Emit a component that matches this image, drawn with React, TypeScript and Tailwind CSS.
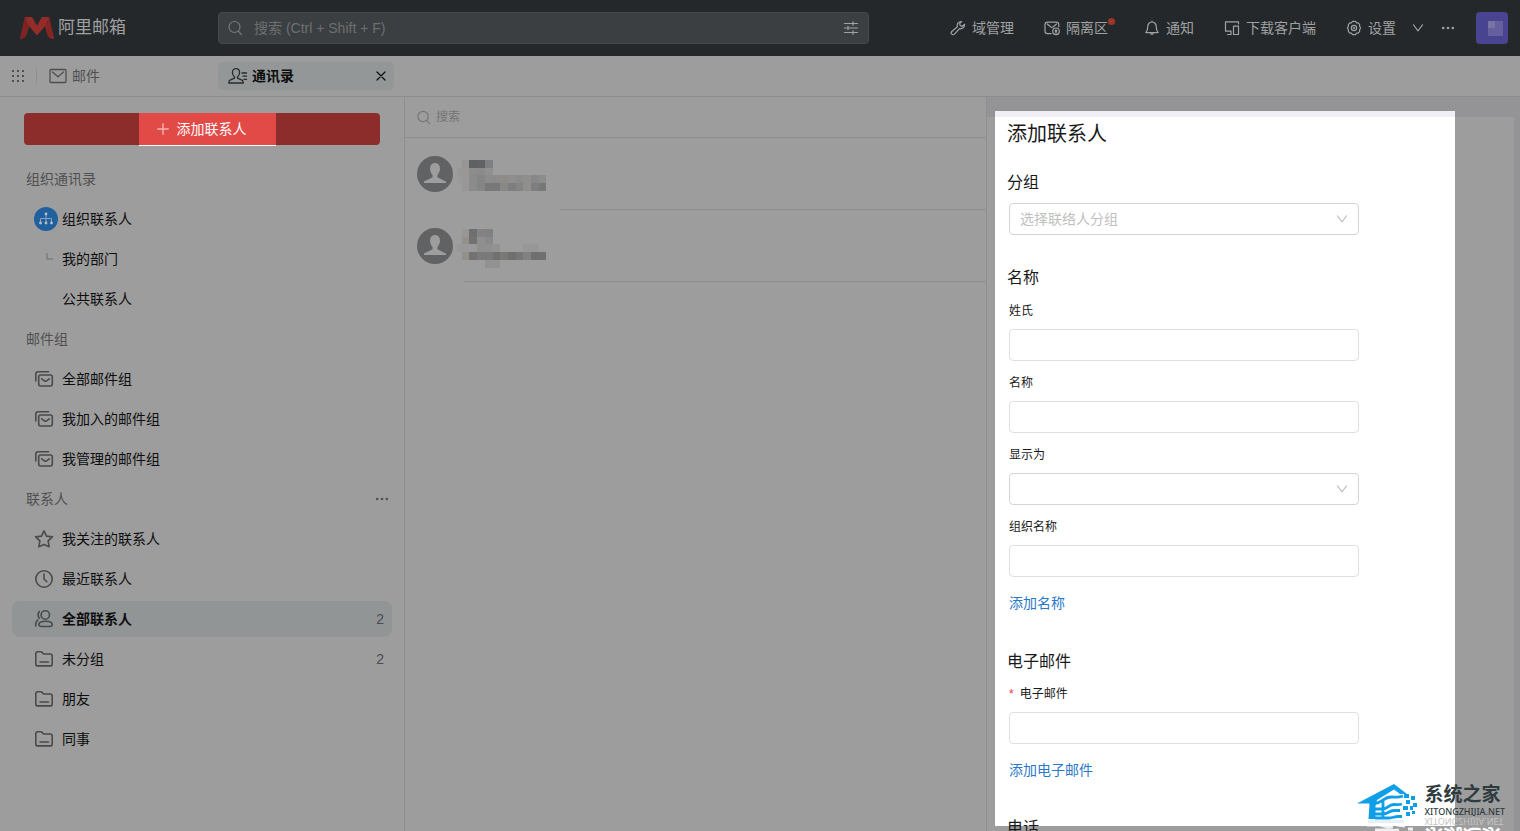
import React from 'react';

interface IconProps {
  className?: string;
}

interface NavItem {
  label: string;
  icon?: React.FC<IconProps>;
  count?: number;
  active?: boolean;
}

interface NavGroup {
  title: string;
  more?: boolean;
  items: NavItem[];
}

const stroke = {
  fill: 'none',
  stroke: 'currentColor',
  strokeLinecap: 'round' as const,
  strokeLinejoin: 'round' as const,
};

/* ---------- Icons ---------- */

const SearchIcon: React.FC<IconProps> = ({ className }) => (
  <svg viewBox="0 0 16 16" className={className} {...stroke} strokeWidth="1.2">
    <circle cx="6.5" cy="7" r="5.5" />
    <path d="M10.500 11.400l3 3.200" />
  </svg>
);

const FilterIcon: React.FC<IconProps> = ({ className }) => (
  <svg viewBox="0 0 16 16" className={className} {...stroke} strokeWidth="1.2">
    <path d="M1.5 3.5h13M1.5 8h13M1.5 12.5h13M10 1.8v3.4M5 6.3v3.4M10 10.8v3.4" />
  </svg>
);

const WrenchIcon: React.FC<IconProps> = ({ className }) => (
  <svg viewBox="0 0 16 16" className={className} {...stroke} strokeWidth="1.2">
    <path d="M11.6 1.5A4 4 0 0 0 7.4 6.7L1.8 11.5a1.9 1.9 0 0 0 2.7 2.7l5-5.6a4 4 0 0 0 5.1-4.3l-2.3 2-2.1-.6-.6-2z" />
  </svg>
);

const QuarantineIcon: React.FC<IconProps> = ({ className }) => (
  <svg viewBox="0 0 16 16" className={className} {...stroke} strokeWidth="1.2">
    <path d="M7.2 13.6H3.4c-1.6 0-2.4-.8-2.4-2.4V4.6c0-1.6.8-2.4 2.4-2.4h9c1.6 0 2.4.8 2.4 2.4v2.2" />
    <path d="M3.3 4l3.6 3c.7.5 1.3.5 2 0l3.6-3" />
    <circle cx="12" cy="11.3" r="3.3" />
    <circle cx="12" cy="10.8" r=".8" />
    <path d="M11 13h2" />
  </svg>
);

const BellIcon: React.FC<IconProps> = ({ className }) => (
  <svg viewBox="0 0 16 16" className={className} {...stroke} strokeWidth="1.2">
    <path d="M8 1.200V2M8 2a4.200 4.200 0 0 0-4.200 4.200c0 3.300-.6 4.900-2 6.400h12.400c-1.400-1.500-2-3.100-2-6.400A4.200 4.200 0 0 0 8 2zM6.500 12.800a1.500 1.500 0 0 0 3 0" />
  </svg>
);

const DeviceIcon: React.FC<IconProps> = ({ className }) => (
  <svg viewBox="0 0 16 16" className={className} {...stroke} strokeWidth="1.2">
    <path d="M14.500 4V1.800h-13v9.400h5.500M7 11.200v3.300M3.500 14.500H7" />
    <rect x="9.500" y="6.200" width="5" height="8.300" />
  </svg>
);

const GearIcon: React.FC<IconProps> = ({ className }) => (
  <svg viewBox="0 0 16 16" className={className} {...stroke} strokeWidth="1.2">
    <path d="M6.500 1.300h3l.9 1.500 1.700.1 1.500 1.500v1.800l1 1.800-1 1.800v1.800l-1.500 1.500-1.700.1-.9 1.500h-3l-.9-1.500-1.700-.1-1.500-1.500V9.800l-1-1.800 1-1.800V4.400l1.500-1.500 1.700-.1z" />
    <circle cx="8" cy="8" r="2.600" />
    <circle cx="8" cy="8" r=".5" />
  </svg>
);

const ChevronIcon: React.FC<IconProps> = ({ className }) => (
  <svg viewBox="0 0 12 12" className={className} {...stroke} strokeWidth="1.1">
    <path d="M1.500 2.800L6 8.800l4.500-6" />
  </svg>
);

const MoreIcon: React.FC<IconProps> = ({ className }) => (
  <svg viewBox="0 0 14 14" className={className} fill="currentColor">
    <circle cx="2.200" cy="7" r="1.300" />
    <circle cx="7" cy="7" r="1.300" />
    <circle cx="11.800" cy="7" r="1.300" />
  </svg>
);

const AppsIcon: React.FC<IconProps> = ({ className }) => (
  <svg viewBox="0 0 14 14" className={className} fill="currentColor">
    {[1, 6, 11].map(y => [1, 6, 11].map(x => <rect key={`${x}-${y}`} x={x} y={y} width="2" height="2" />))}
  </svg>
);

const MailIcon: React.FC<IconProps> = ({ className }) => (
  <svg viewBox="0 0 18 18" className={className} {...stroke} strokeWidth="1.300">
    <rect x="1" y="2.500" width="16" height="13" rx="1" />
    <path d="M3.500 5L9 9.800 14.500 5" />
  </svg>
);

const ContactsIcon: React.FC<IconProps> = ({ className }) => (
  <svg viewBox="0 0 20 18" className={className} {...stroke} strokeWidth="1.300">
    <path d="M6.500 9.800C5 8.800 4.400 7.400 4.400 5.600 4.400 3.200 5.900 1.600 8 1.600s3.600 1.600 3.600 4c0 1.800-.6 3.200-2.100 4.200v1.400l4.500 2c1 .5 1.300 1.300 1.300 2.800H.8c0-1.500.3-2.300 1.300-2.800l4.400-2z" />
    <path d="M14 6h4.500M15 9.200h3.500M16 12.400h2.500" />
  </svg>
);

const CloseIcon: React.FC<IconProps> = ({ className }) => (
  <svg viewBox="0 0 10 10" className={className} {...stroke} strokeWidth="1.200">
    <path d="M1 1l8 8M9 1L1 9" />
  </svg>
);

const PlusIcon: React.FC<IconProps> = ({ className }) => (
  <svg viewBox="0 0 12 12" className={className} {...stroke} strokeWidth="1.400">
    <path d="M6 .8v10.400M.8 6h10.400" />
  </svg>
);

const OrgIcon: React.FC<IconProps> = () => (
  <svg viewBox="0 0 24 24" className="h-6 w-6">
    <circle cx="12" cy="12" r="12" fill="#20609f" />
    <path d="M12 7v8.500M6.500 15.500v-4h11v4" fill="none" stroke="#8aa3bd" />
    <g fill="#b4bfca">
      <circle cx="12" cy="7" r="1.400" />
      <circle cx="6.500" cy="16" r="1.400" />
      <circle cx="12" cy="16" r="1.400" />
      <circle cx="17.500" cy="16" r="1.400" />
    </g>
  </svg>
);

const BranchIcon: React.FC<IconProps> = () => (
  <svg viewBox="0 0 20 20" className="h-5 w-5" fill="none" stroke="#848484" strokeWidth="2">
    <path d="M13 4v6h6" />
  </svg>
);

const MailGroupIcon: React.FC<IconProps> = ({ className }) => (
  <svg viewBox="0 0 20 20" className={className} {...stroke} strokeWidth="1.600">
    <path d="M1.800 12V5.300c0-1.600.9-2.500 2.500-2.500h10.200" />
    <rect x="4.700" y="6" width="13.600" height="11" rx="2" />
    <path d="M7.700 9.800l2.700 2c.7.500 1.500.5 2.200 0l2.700-2" />
  </svg>
);

const StarIcon: React.FC<IconProps> = ({ className }) => (
  <svg viewBox="0 0 20 20" className={className} {...stroke} strokeWidth="1.600">
    <path d="M10 1.900l2.500 5.200 5.900.8-4.300 4 1.100 5.900-5.200-2.300-5.200 2.300 1.100-5.900-4.300-4 5.900-.8z" />
  </svg>
);

const ClockIcon: React.FC<IconProps> = ({ className }) => (
  <svg viewBox="0 0 20 20" className={className} {...stroke} strokeWidth="1.600">
    <circle cx="10" cy="10" r="8.200" />
    <path d="M10 5v5l2.800 2.800" />
  </svg>
);

const PeopleIcon: React.FC<IconProps> = ({ className }) => (
  <svg viewBox="0 0 20 20" className={className} {...stroke} strokeWidth="1.600">
    <circle cx="11.300" cy="6" r="4.200" />
    <path d="M8 17.500h7.500c2 0 2.800-.6 2.800-2 0-2-2.200-3.300-6.500-3.300S4.800 13.500 4.800 15.500c0 1.400.9 2 3.200 2z" />
    <path d="M5.300 2.500C3.800 4.600 3.800 7 5.300 9.200M3.800 11C2.200 12 1.700 13.800 1.700 17" />
  </svg>
);

const FolderIcon: React.FC<IconProps> = ({ className }) => (
  <svg viewBox="0 0 20 20" className={className} {...stroke} strokeWidth="1.600">
    <path d="M1.800 14.900V5c0-1.400.7-2.200 2-2.200h2.900c.8 0 1.300.3 1.800.9l1 1.300h6.700c1.300 0 2 .7 2 2v7.900c0 1.300-.7 2-2 2H3.800c-1.300 0-2-.7-2-2z" />
    <path d="M6 13h8.500" />
  </svg>
);

const LogoMark: React.FC<IconProps> = ({ className }) => (
  <svg viewBox="0 0 34 22" className={className}>
    <path d="M5 0h7l5 8.500L22 0h7l5 22c-4.500-.6-6-2-7-6l-2-7-8 9.500L9 9l-2 7c-1 4-2.500 5.400-7 6z" fill="#942c2a" />
    <path d="M5 0L0 22c4.500-.6 6-2 7-6l2-7z" fill="#7d2322" />
    <path d="M29 0l5 22c-4.500-.6-6-2-7-6l-2-7z" fill="#842524" />
  </svg>
);

const ContactAvatar: React.FC<IconProps> = ({ className }) => (
  <svg viewBox="0 0 36 36" className={className}>
    <circle cx="18" cy="18" r="18" fill="#616264" />
    <path
      d="M18 7c3.200 0 5 2.300 5 5.600 0 2.600-1 4.900-2.600 6.400v2.200l8.600 4.300V27H7v-1.500l8.600-4.300V19C14 17.500 13 15.200 13 12.600 13 9.300 14.800 7 18 7z"
      fill="#9d9d9d"
    />
  </svg>
);

/* ---------- Data ---------- */

const navGroups: NavGroup[] = [
  {
    title: '组织通讯录',
    items: [
      { label: '组织联系人', icon: OrgIcon },
      { label: '我的部门', icon: BranchIcon },
      { label: '公共联系人' },
    ],
  },
  {
    title: '邮件组',
    items: [
      { label: '全部邮件组', icon: MailGroupIcon },
      { label: '我加入的邮件组', icon: MailGroupIcon },
      { label: '我管理的邮件组', icon: MailGroupIcon },
    ],
  },
  {
    title: '联系人',
    more: true,
    items: [
      { label: '我关注的联系人', icon: StarIcon },
      { label: '最近联系人', icon: ClockIcon },
      { label: '全部联系人', icon: PeopleIcon, count: 2, active: true },
      { label: '未分组', icon: FolderIcon, count: 2 },
      { label: '朋友', icon: FolderIcon },
      { label: '同事', icon: FolderIcon },
    ],
  },
];

const headerLinks = [
  { label: '域管理', icon: WrenchIcon },
  { label: '隔离区', icon: QuarantineIcon, dot: true },
  { label: '通知', icon: BellIcon },
  { label: '下载客户端', icon: DeviceIcon },
  { label: '设置', icon: GearIcon },
];

// Masked contact details, one hex colour per block ('' leaves a gap)
const contacts = [
  {
    id: 1,
    top: 1,
    line: 'ml-[155px]',
    blocks: [
      ['', '#989694', '#5f6062', '#616264', '#7e7f81', '', '', '', '', '', '', ''],
      ['#989898', '#999693', '#8c8c8d', '#8b8b8b', '#909091', '', '', '', '', '', '', ''],
      ['#9a9a9a', '#999999', '#8b8b8b', '#858585', '#8c8c8c', '#8b8b8b', '#8e8c89', '#8f8f8e', '#8b8b8b', '#928f8b', '#88888a', '#8d8d8e'],
      ['', '#999693', '#8b8b8b', '#858585', '#78787a', '#78787a', '#8a8885', '#7e7e80', '#848484', '#8f8f8e', '#7e7e80', '#787879'],
    ],
  },
  {
    id: 2,
    top: 6,
    line: 'ml-[59px]',
    blocks: [
      ['', '#999693', '#6f6f70', '#848382', '#808184', '', '', '', '', '', '', ''],
      ['', '#938f8b', '#727274', '#8f8f8f', '#88898b', '', '', '', '', '', '', ''],
      ['#989898', '#999999', '#999999', '#8f8f8f', '#8f8f90', '#929292', '', '', '', '#979798', '#979798', ''],
      ['', '#938f8b', '#727274', '#7a7a7a', '#7a7a7a', '#707071', '#7a7875', '#6f6f70', '#767678', '#818181', '#6f6f70', '#707070'],
      ['', '', '', '', '#929293', '#929293', '', '', '', '', '', ''],
    ],
  },
];

/* ---------- Pieces ---------- */

const Header: React.FC = () => (
  <header className="h-14 shrink-0 bg-[#24282b] text-[#a0a1a2] flex items-center pl-5 pr-3">
    <a href="#" className="w-[198px] shrink-0 flex items-center gap-1">
      <LogoMark className="w-[34px] h-[22px]" />
      <span className="text-[17px] leading-6">阿里邮箱</span>
    </a>

    <label className="flex-1 h-8 flex items-center gap-2.5 px-[9px] rounded border border-[#45494b] bg-[#3b3f41]">
      <SearchIcon className="w-4 h-4 text-[#77797a]" />
      <input
        type="search"
        aria-label="搜索邮件"
        placeholder="搜索 (Ctrl + Shift + F)"
        className="flex-1 min-w-0 bg-transparent outline-none placeholder:text-[#6d7071]"
      />
      <FilterIcon className="w-4 h-4" />
    </label>

    <nav className="ml-[81px] flex items-center gap-[30px]">
      {headerLinks.map(({ label, icon: Icon, dot }) => (
        <a key={label} href="#" className={`relative flex items-center gap-1.5 ${dot ? 'pr-1.5' : ''}`}>
          <Icon className="w-4 h-4" />
          {label}
          {dot && <span className="absolute top-0 -right-px w-[7px] h-[7px] rounded-full bg-[#9c3629]" />}
        </a>
      ))}
    </nav>
    <button type="button" aria-label="展开" className="ml-4">
      <ChevronIcon className="w-3 h-3" />
    </button>
    <button type="button" aria-label="更多" className="ml-[17px]">
      <MoreIcon className="w-3.5 h-3.5" />
    </button>
    <button type="button" aria-label="账户" className="ml-[21px] w-8 h-8 rounded bg-[#49448f] overflow-hidden">
      <svg viewBox="0 0 32 32" className="w-8 h-8">
        <rect x="12" y="9" width="15" height="15" fill="#655f9d" />
        <rect x="12" y="9" width="7" height="7" fill="#7873a4" />
      </svg>
    </button>
  </header>
);

const TabBar: React.FC = () => (
  <div className="h-[41px] shrink-0 border-b border-[#8d8d8d] flex items-center pl-[11px]">
    <button type="button" aria-label="应用" className="text-[#505050]">
      <AppsIcon className="w-3.5 h-3.5" />
    </button>
    <span className="ml-[11px] w-px h-4 bg-[#8f8f8f]" />
    <a href="#" className="ml-3 w-[169px] flex items-center gap-[5px] text-[#4f4f4f]">
      <MailIcon className="w-[18px] h-[18px]" />
      邮件
    </a>
    <div className="w-[176px] h-7 rounded-md bg-[#939797] flex items-center pl-2.5 pr-2 text-[#0d0d0d]">
      <a href="#" className="flex-1 flex items-center gap-1 font-bold">
        <ContactsIcon className="w-5 h-[18px] text-[#2b2b2b]" />
        通讯录
      </a>
      <button type="button" aria-label="关闭">
        <CloseIcon className="w-2.5 h-2.5" />
      </button>
    </div>
  </div>
);

const Sidebar: React.FC = () => (
  <aside className="w-[405px] shrink-0 border-r border-[#8f8f8f] pt-4 px-3">
    <button
      type="button"
      className="mx-3 w-[356px] h-8 rounded bg-[#8c2d2b] flex items-start justify-center pl-2.5 text-white"
    >
      <span className="h-[33px] pl-[18px] pr-[29px] flex items-center gap-2 bg-[#e24a47] border-b border-white">
        <PlusIcon className="w-3 h-3 text-[#f4b5b3]" />
        添加联系人
      </span>
    </button>

    <nav className="mt-4 flex flex-col gap-1">
      {navGroups.map(group => (
        <React.Fragment key={group.title}>
          <div className="h-9 pl-3.5 pr-[3px] flex items-center justify-between text-[#505050]">
            <h2>{group.title}</h2>
            {group.more && (
              <button type="button" aria-label="更多">
                <MoreIcon className="w-3.5 h-3.5" />
              </button>
            )}
          </div>
          {group.items.map(({ label, icon: Icon, count, active }) => (
            <a
              key={label}
              href="#"
              className={`h-9 pl-[22px] pr-2 rounded-lg flex items-center text-[#0d0d0d] ${
                active ? 'bg-[#919595] font-bold' : ''
              }`}
            >
              <span className="w-7 text-[#4a4a4a]">{Icon && <Icon className="w-5 h-5" />}</span>
              <span className="flex-1">{label}</span>
              {count !== undefined && <span className="font-normal text-[#4a4b52]">{count}</span>}
            </a>
          ))}
        </React.Fragment>
      ))}
    </nav>
  </aside>
);

const ContactList: React.FC = () => (
  <section className="flex-1 min-w-0">
    <label className="h-[41px] border-b border-[#8f8f8f] flex items-center gap-1 px-3 text-[12px] text-[#747474]">
      <SearchIcon className="w-[15px] h-[15px]" />
      <input
        type="search"
        aria-label="搜索联系人"
        placeholder="搜索"
        className="flex-1 bg-transparent outline-none placeholder:text-[#747474]"
      />
    </label>
    <ul>
      {contacts.map(contact => (
        <li key={contact.id}>
          <div className="h-[71px] pl-3 flex items-center gap-1">
            <ContactAvatar className="w-9 h-9" />
            <svg viewBox="0 0 92 46" className="w-[92px] h-[46px]" shapeRendering="crispEdges">
              {contact.blocks.map((row, y) =>
                row.map((color, x) =>
                  color ? (
                    <rect
                      key={`${x}-${y}`}
                      x={x * 7.7 - 3}
                      y={contact.top + 7.7 * y + (contact.id === 1 ? 8 : 0)}
                      width="7.7"
                      height="7.7"
                      fill={color}
                    />
                  ) : null
                )
              )}
            </svg>
          </div>
          <div className={`h-px bg-[#8f8f8f] ${contact.line}`} />
        </li>
      ))}
    </ul>
  </section>
);

const TextField: React.FC<{ id: string; label: string; required?: boolean }> = ({ id, label, required }) => (
  <div className="pl-0.5 flex flex-col gap-2">
    <label htmlFor={id} className="text-[12px] leading-5 flex gap-1.5">
      {required && <span className="text-[#f5393d]">*</span>}
      {label}
    </label>
    <input
      id={id}
      type="text"
      required={required}
      className="w-[350px] h-8 px-2.5 rounded border border-[#e0e0e0] bg-white outline-none"
    />
  </div>
);

const SelectBox: React.FC<{ id: string; label?: string; placeholder?: string }> = ({ id, label, placeholder }) => (
  <div className="pl-0.5 flex flex-col gap-2">
    {label && (
      <label htmlFor={id} className="text-[12px] leading-5">
        {label}
      </label>
    )}
    <div className="relative w-[350px]">
      <select
        id={id}
        aria-label={label || placeholder}
        defaultValue=""
        className="w-full h-8 pl-2.5 pr-8 rounded border border-[#d5d5d5] bg-white appearance-none text-[#bfbfbf]"
      >
        <option value="">{placeholder}</option>
      </select>
      <ChevronIcon className="absolute right-[11px] top-2.5 w-3 h-3 text-[#bfbfbf] pointer-events-none" />
    </div>
  </div>
);

const ContactForm: React.FC = () => (
  <section className="w-[534px] shrink-0 border-l border-[#8f8f91] pt-5 pr-1.5 bg-[#949496] flex flex-col overflow-hidden">
    <div className="flex-1 min-h-0 bg-[#9d9d9d] pl-2 pr-[59px] pb-[5px] flex">
      <form className="-mt-1.5 flex-1 border-t-[6px] border-[#f0eff5] bg-white pt-px pl-3 text-[#1a1a1a]">
        <h1 className="text-[20px] leading-8">添加联系人</h1>

        <h2 className="mt-[21px] mb-2 text-[16px] leading-6">分组</h2>
        <SelectBox id="group" placeholder="选择联络人分组" />

        <h2 className="mt-[31px] text-[16px] leading-6">名称</h2>
        <div className="mt-[11px] flex flex-col gap-3">
          <TextField id="surname" label="姓氏" />
          <TextField id="given-name" label="名称" />
          <SelectBox id="display-as" label="显示为" />
          <TextField id="org-name" label="组织名称" />
        </div>
        <a href="#" className="block mt-4 pl-0.5 leading-5 text-[#2b78c8]">
          添加名称
        </a>

        <h2 className="mt-[37px] mb-2.5 text-[16px] leading-6">电子邮件</h2>
        <TextField id="email" label="电子邮件" required />
        <a href="#" className="block mt-4 pl-0.5 leading-5 text-[#2b78c8]">
          添加电子邮件
        </a>

        <h2 className="mt-9 text-[16px] leading-6">电话</h2>
      </form>
    </div>
  </section>
);

const HouseMark: React.FC<IconProps> = ({ className }) => (
  <svg viewBox="0 0 62 48" className={className}>
    <path d="M0 20.500L37 1l13 10h-7l-6-4.500-17 10.500-1.500 6V36h-7l1-15.500z" fill="#0e9fe8" />
    <path
      d="M18 20.500c7-.5 9-6.500 16-6.500 6 0 7 1 12-1M18 26h8c5 0 5-4.500 11-4.500 4 0 5 .5 8-.5M18 31h8c5 0 6-3.500 11-3.500h6M18 35h14c4 0 5-1.500 9-1.500h4M26 17v18"
      fill="none"
      stroke="#0e9fe8"
      strokeWidth="2.800"
    />
    <g fill="#0e9fe8">
      <rect x="47" y="11" width="5" height="4" />
      <rect x="54" y="13" width="4" height="4" />
      <rect x="49" y="17" width="4" height="4" />
      <rect x="56" y="20" width="4" height="4" />
      <rect x="46" y="23" width="5" height="4" />
      <rect x="53" y="23" width="3" height="4" />
      <rect x="49" y="29" width="4" height="4" />
      <rect x="55" y="28" width="3" height="3" />
    </g>
    <path d="M11 37h36v3H11z" fill="#dbe9f2" opacity=".7" />
    <path
      d="M10 42h8c8-1 10 3 18 2M18 47h10c6 0 8 1 14 0M40 42l8 1M50 41h4M51 46h5"
      fill="none"
      stroke="#ffffff"
      strokeWidth="3"
      opacity=".85"
    />
  </svg>
);

const Watermark: React.FC = () => (
  <div className="absolute right-[15px] bottom-0 h-12 flex gap-1.5 overflow-hidden pointer-events-none">
    <HouseMark className="w-[62px] h-12" />
    <div className="h-12">
      <p className="text-[19px] leading-6 font-bold text-[#2f3b3f]">系统之家</p>
      <p className="font-['Noto_Sans'] text-[9px] leading-2.5 font-medium text-[#2f3b3f]">XITONGZHIJIA.NET</p>
      <div aria-hidden="true" className="-scale-y-100 text-white">
        <p className="text-[19px] leading-5 font-bold">系统之家</p>
        <p className="font-['Noto_Sans'] text-[9px] leading-2 text-[#c4c4c4]">XITONGZHIJIA.NET</p>
      </div>
    </div>
  </div>
);

export default function App() {
  return (
    <div className="relative h-screen flex flex-col overflow-hidden bg-[#9d9d9d] font-['Liberation_Sans','Noto_Sans_CJK_SC',sans-serif] text-[14px] leading-5">
      <Header />
      <TabBar />
      <main className="flex-1 min-h-0 flex">
        <Sidebar />
        <ContactList />
        <ContactForm />
      </main>
      <Watermark />
    </div>
  );
}
